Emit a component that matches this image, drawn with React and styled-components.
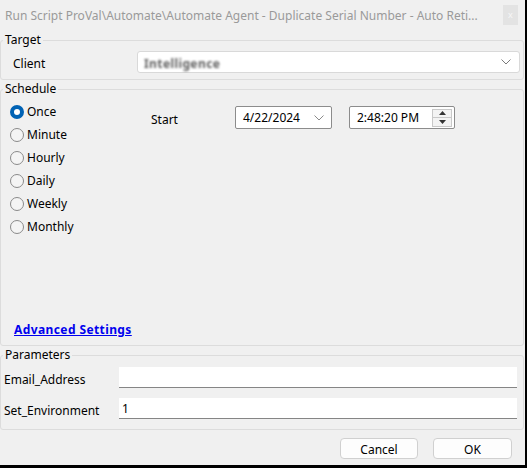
import React from 'react';
import styled, { createGlobalStyle } from 'styled-components';

const Global = createGlobalStyle`
  html, body { margin: 0; padding: 0; background: #000; }
  body {
    font-family: "Segoe UI", "Noto Sans", sans-serif;
    font-size: 12px;
    color: #000;
  }
  * { box-sizing: border-box; }
`;

const Window = styled.div`
  width: 525px;
  height: 465px;
  background: #f0f0f0;
  display: flex;
  flex-direction: column;
  overflow: hidden;
`;

const TitleBar = styled.div`
  height: 30px;
  display: flex;
  align-items: center;
  justify-content: space-between;
  padding: 0 7px 0 5px;
`;

const Title = styled.span`
  color: #9a9a9a;
  font-size: 12px;
  white-space: nowrap;
`;

const CloseBox = styled.div`
  width: 15px;
  height: 20px;
  margin-top: -1px;
  background: #e3e3e3;
  color: #f7f7f7;
  font-size: 9px;
  display: flex;
  align-items: center;
  justify-content: center;
`;

const Group = styled.fieldset`
  margin: ${p => p.$mt}px 1px 0 0;
  padding: ${p => p.$pad};
  border: 1px solid #dcdcdc;
  border-radius: 3px;
  min-width: 0;
`;

const Legend = styled.legend`
  padding: 0 2px;
  margin-left: 2px;
  font-size: 12px;
  line-height: 16px;
  color: #000;
`;

const FieldRow = styled.div`
  display: flex;
  align-items: center;
  padding-left: ${p => p.$pl}px;
  padding-right: ${p => p.$pr}px;
`;

const FieldLabel = styled.span`
  width: ${p => p.$w}px;
  flex: none;
  white-space: nowrap;
  padding-top: 3px;
`;

const Combo = styled.div`
  flex: 1;
  height: 22px;
  background: #fff;
  border: 1px solid #d9d9d9;
  border-radius: 3px;
  display: flex;
  align-items: center;
  justify-content: space-between;
  padding: 0 8px 0 6px;
`;

const Blurred = styled.span`
  color: #2a2a2a;
  font-weight: 700;
  filter: blur(1px);
  letter-spacing: 0.4px;
  padding-top: 2px;
  opacity: 0.75;
`;

const ScheduleBody = styled.div`
  height: 245px;
  display: flex;
  flex-direction: column;
`;

const ScheduleTop = styled.div`
  display: flex;
  align-items: flex-start;
`;

const RadioList = styled.div`
  width: 150px;
  padding-left: 9px;
  display: flex;
  flex-direction: column;
`;

const RadioRow = styled.label`
  height: 23px;
  display: flex;
  align-items: center;
  gap: 3px;
  color: #000;
`;

const RadioDot = styled.span`
  width: 14px;
  height: 14px;
  border-radius: 50%;
  flex: none;
  border: ${p => (p.$on ? '4px solid #0062b4' : '1px solid #8a8a8a')};
  background: ${p => (p.$on ? '#fff' : '#f4f4f4')};
`;

const StartArea = styled.div`
  display: flex;
  align-items: center;
  margin-top: 6px;
`;

const StartLabel = styled.span`
  width: 84px;
  padding-top: 4px;
`;

const DateBox = styled.div`
  width: ${p => p.$w}px;
  height: 23px;
  margin-right: ${p => p.$mr || 0}px;
  background: #fff;
  border: 1px solid #8c8c8c;
  border-radius: 2px;
  display: flex;
  align-items: center;
  justify-content: space-between;
  padding: 0 2px 0 7px;
`;

const Spin = styled.div`
  width: 20px;
  height: 18px;
  display: flex;
  flex-direction: column;
  border: 1px solid #c8c8c8;
  background: #f3f3f3;
`;

const SpinHalf = styled.div`
  flex: 1;
  display: flex;
  align-items: center;
  justify-content: center;
  border-top: ${p => (p.$second ? '1px solid #c8c8c8' : 'none')};
`;

const AdvancedLink = styled.a`
  margin-top: auto;
  margin-bottom: 7px;
  margin-left: 13px;
  align-self: flex-start;
  color: #0000ee;
  font-weight: 700;
  letter-spacing: 0.4px;
  text-decoration: underline;
  line-height: 16px;
  cursor: pointer;
`;

const ParamList = styled.div`
  display: flex;
  flex-direction: column;
  gap: 10px;
`;

const TextInput = styled.div`
  flex: 1;
  height: 21px;
  background: #fff;
  border-bottom: 1px solid #858585;
  padding-left: 3px;
  display: flex;
  align-items: center;
`;

const ButtonBar = styled.div`
  display: flex;
  justify-content: flex-end;
  gap: 15px;
  padding: 8px 13px 0 0;
`;

const Button = styled.button`
  width: ${p => p.$w}px;
  height: 21px;
  background: #fdfdfd;
  border: 1px solid #d0d0d0;
  border-radius: 4px;
  font-family: inherit;
  font-size: 12px;
  color: #000;
  padding: 1px 0 0;
`;

const ChevronWrap = styled.span`
  display: flex;
  margin-right: ${p => p.$mr || 0}px;
`;

const Chevron = ({ color = '#7a7a7a' }) => (
  <svg width="10" height="6" viewBox="0 0 10 6">
    <path d="M0.5 0.5 L5 5 L9.5 0.5" fill="none" stroke={color} strokeWidth="1" />
  </svg>
);

const Tri = ({ up }) => (
  <svg width="7" height="4" viewBox="0 0 7 4">
    <path d={up ? 'M0 4 L3.5 0 L7 4 Z' : 'M0 0 L3.5 4 L7 0 Z'} fill="#333" />
  </svg>
);

const radios = ['Once', 'Minute', 'Hourly', 'Daily', 'Weekly', 'Monthly'];

export default function App() {
  return (
    <>
      <Global />
      <Window>
        <TitleBar>
          <Title>Run Script ProVal\Automate\Automate Agent - Duplicate Serial Number - Auto Reti...</Title>
          <CloseBox>x</CloseBox>
        </TitleBar>

        <Group $mt={2} $pad="3px 3px 6px 0">
          <Legend>Target</Legend>
          <FieldRow $pl={12} $pr={0}>
            <FieldLabel $w={124}>Client</FieldLabel>
            <Combo>
              <Blurred>Intelligence</Blurred>
              <Chevron />
            </Combo>
          </FieldRow>
        </Group>

        <Group $mt={1} $pad="3px 0 0 0">
          <Legend>Schedule</Legend>
          <ScheduleBody>
            <ScheduleTop>
              <RadioList>
                {radios.map((r, i) => (
                  <RadioRow key={r}>
                    <RadioDot $on={i === 0} />
                    {r}
                  </RadioRow>
                ))}
              </RadioList>
              <StartArea>
                <StartLabel>Start</StartLabel>
                <DateBox $w={97} $mr={17}>
                  <span>4/22/2024</span>
                  <ChevronWrap $mr={5}>
                    <Chevron color="#8a8a8a" />
                  </ChevronWrap>
                </DateBox>
                <DateBox $w={106}>
                  <span>2:48:20 PM</span>
                  <Spin>
                    <SpinHalf><Tri up /></SpinHalf>
                    <SpinHalf $second><Tri /></SpinHalf>
                  </Spin>
                </DateBox>
              </StartArea>
            </ScheduleTop>
            <AdvancedLink>Advanced Settings</AdvancedLink>
          </ScheduleBody>
        </Group>

        <Group $mt={1} $pad="4px 6px 10px 0">
          <Legend>Parameters</Legend>
          <ParamList>
            <FieldRow $pl={3} $pr={0}>
              <FieldLabel $w={115}>Email_Address</FieldLabel>
              <TextInput />
            </FieldRow>
            <FieldRow $pl={3} $pr={0}>
              <FieldLabel $w={115}>Set_Environment</FieldLabel>
              <TextInput>1</TextInput>
            </FieldRow>
          </ParamList>
        </Group>

        <ButtonBar>
          <Button $w={78}>Cancel</Button>
          <Button $w={79}>OK</Button>
        </ButtonBar>
      </Window>
    </>
  );
}
